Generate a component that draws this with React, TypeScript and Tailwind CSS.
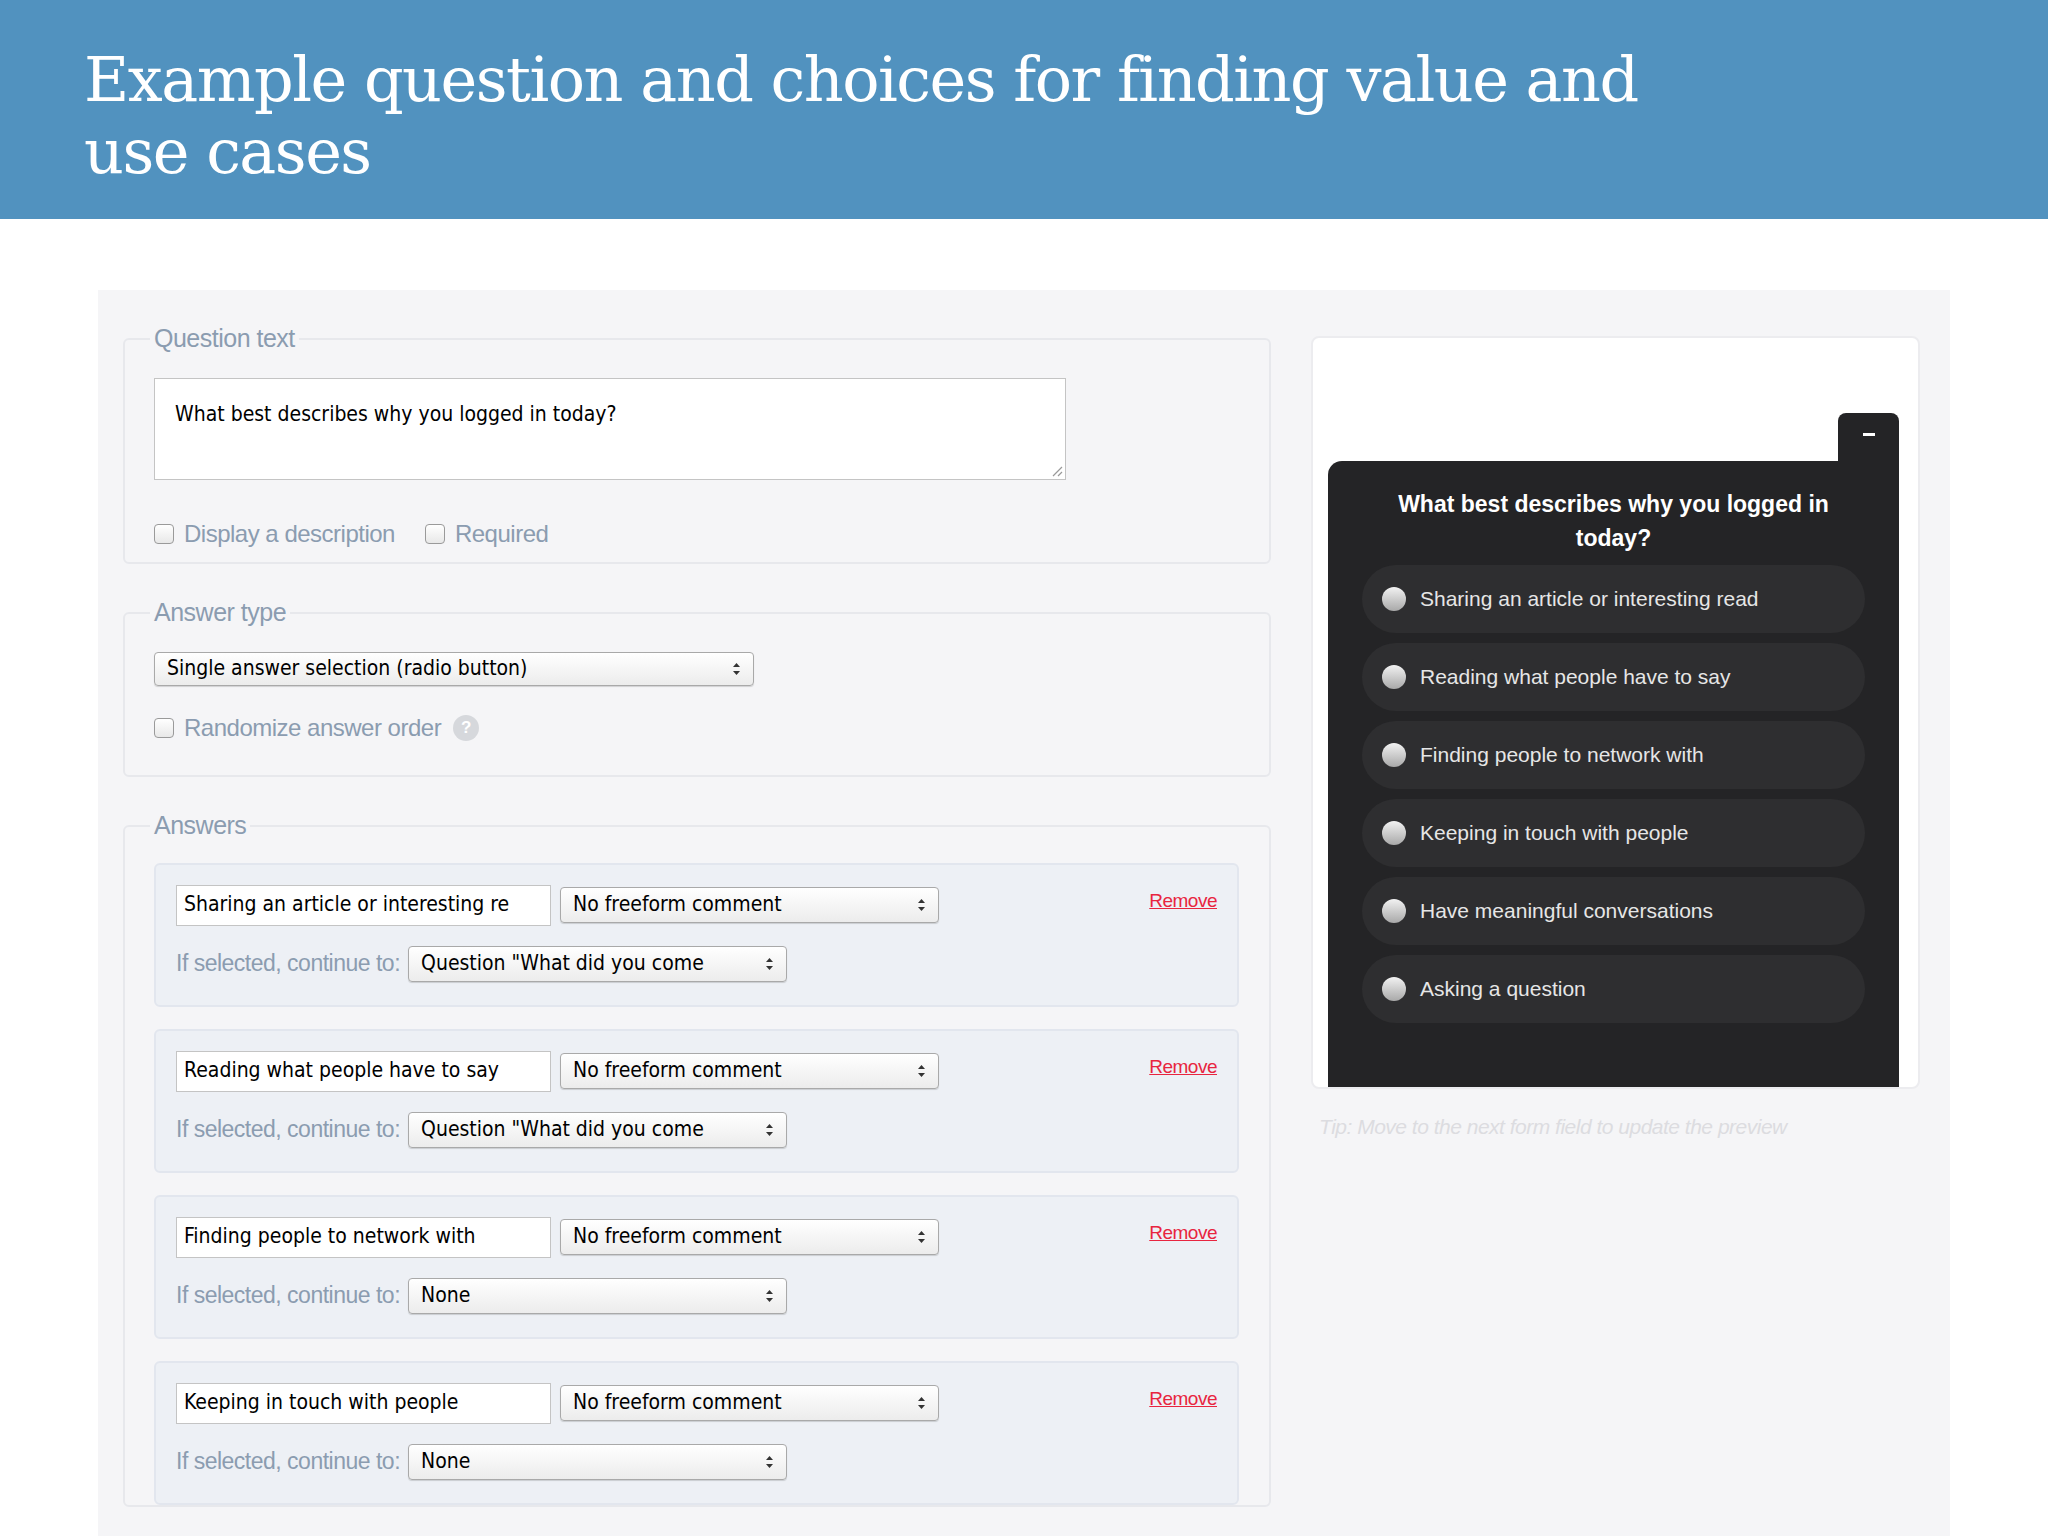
const answers = [
  { text: "Sharing an article or interesting re", next: 'Question "What did you come' },
  { text: "Reading what people have to say", next: 'Question "What did you come' },
  { text: "Finding people to network with", next: "None" },
  { text: "Keeping in touch with people", next: "None" },
];

const preview = [
  "Sharing an article or interesting read",
  "Reading what people have to say",
  "Finding people to network with",
  "Keeping in touch with people",
  "Have meaningful conversations",
  "Asking a question",
];

const uiFont = { fontFamily: '"Liberation Sans", Arial, sans-serif' };
const inputFont = { fontFamily: '"DejaVu Sans Condensed", "DejaVu Sans", sans-serif' };

function Arrows() {
  return (
    <svg width="9" height="14" viewBox="0 0 9 14" className="shrink-0">
      <path d="M4.5 1 L8 5 H1 Z" fill="#333" />
      <path d="M4.5 13 L8 9 H1 Z" fill="#333" />
    </svg>
  );
}

function Select({ label, className }: { label: string; className: string }) {
  return (
    <div
      className={`flex items-center justify-between rounded-[4px] border border-[#a9a9a9] bg-gradient-to-b from-white to-[#ececec] pl-3 pr-3 text-[21px] text-black shadow-[0_1px_1px_rgba(0,0,0,0.15)] ${className}`}
      style={inputFont}
    >
      <span className="truncate whitespace-nowrap">{label}</span>
      <Arrows />
    </div>
  );
}

function Checkbox({ label }: { label: string }) {
  return (
    <label className="flex items-center gap-[10px]">
      <span className="h-[20px] w-[20px] rounded-[4px] border border-[#9a9a9a] bg-gradient-to-b from-white to-[#e8e8e8]" />
      <span className="text-[24px] tracking-[-0.5px] text-[#8b9cb0]">{label}</span>
    </label>
  );
}

function Fieldset({ legend, children, className }: { legend: string; children: React.ReactNode; className: string }) {
  return (
    <fieldset className={`rounded-[6px] border-2 border-[#e7e8ec] px-[29px] ${className}`}>
      <legend className="px-[4px] -ml-[4px] text-[25px] tracking-[-0.5px] text-[#8b9cb0]">{legend}</legend>
      {children}
    </fieldset>
  );
}

export default function App() {
  return (
    <div className="min-h-[1536px] w-[2048px] overflow-hidden bg-white" style={uiFont}>
      <header className="h-[219px] bg-[#5192bf] pl-[84px] pt-[44px]">
        <h1
          className="w-[1600px] text-[62px] leading-[72px] text-white"
          style={{ fontFamily: '"DejaVu Serif", "Liberation Serif", serif', letterSpacing: "-1.5px" }}
        >
          Example question and choices for finding value and use cases
        </h1>
      </header>

      <div className="ml-[98px] mt-[71px] flex h-[1300px] w-[1852px] gap-[40px] bg-[#f5f5f7] pl-[25px] pt-[30px]">
        <div className="flex w-[1148px] flex-col gap-[30px]">
          <Fieldset legend="Question text" className="h-[244px]">
            <div
              className="relative mt-[20px] h-[102px] w-[912px] border border-[#c4c4c4] bg-white px-[20px] pt-[20px] text-[21px] text-black"
              style={inputFont}
            >
              What best describes why you logged in today?
              <svg className="absolute bottom-[2px] right-[2px]" width="14" height="14" viewBox="0 0 14 14">
                <path d="M13 4 L4 13 M13 9 L9 13" stroke="#999" strokeWidth="1.2" />
              </svg>
            </div>
            <div className="mt-[36px] flex gap-[30px]">
              <Checkbox label="Display a description" />
              <Checkbox label="Required" />
            </div>
          </Fieldset>

          <Fieldset legend="Answer type" className="h-[183px]">
            <Select label="Single answer selection (radio button)" className="mt-[20px] h-[34px] w-[600px]" />
            <div className="mt-[24px] flex items-center gap-[12px]">
              <Checkbox label="Randomize answer order" />
              <span className="flex h-[26px] w-[26px] items-center justify-center rounded-full bg-[#d6d8dc] text-[17px] font-bold text-white">
                ?
              </span>
            </div>
          </Fieldset>

          <Fieldset legend="Answers" className="h-[700px] pr-[30px]">
            <div className="mt-[18px] flex flex-col gap-[22px]">
              {answers.map((a) => (
                <div
                  key={a.text}
                  className="relative h-[144px] rounded-[6px] border-2 border-[#e2e6ee] bg-[#edf0f5] pl-[20px] pt-[20px]"
                >
                  <div className="flex items-center gap-[9px]">
                    <div
                      className="flex h-[41px] w-[375px] items-center overflow-hidden whitespace-nowrap border border-[#c4c4c4] bg-white px-[7px] text-[21px] text-black"
                      style={inputFont}
                    >
                      {a.text}
                    </div>
                    <Select label="No freeform comment" className="h-[36px] w-[379px]" />
                  </div>
                  <div className="mt-[20px] flex items-center gap-[8px]">
                    <span className="text-[23px] tracking-[-0.5px] text-[#8b9cb0]">If selected, continue to:</span>
                    <Select label={a.next} className="h-[36px] w-[379px]" />
                  </div>
                  <a className="absolute right-[20px] top-[22px] text-[19px] tracking-[-0.5px] text-[#e8253f] underline">
                    Remove
                  </a>
                </div>
              ))}
            </div>
          </Fieldset>
        </div>

        <div className="w-[609px] pt-[16px]">
          <div className="flex h-[753px] flex-col justify-end rounded-[8px] border-2 border-[#ececef] bg-white px-[15px]">
            <div className="flex flex-col">
              <div className="flex justify-end pr-[4px]">
                <div className="flex h-[48px] w-[61px] justify-center rounded-t-[8px] bg-[#242426] pt-[20px]">
                  <span className="h-[3px] w-[12px] bg-white" />
                </div>
              </div>
              <div className="mr-[4px] h-[626px] rounded-tl-[14px] bg-[#242426] px-[34px] pt-[26px]">
                <p className="px-[20px] text-center text-[23px] font-bold leading-[34px] text-white">
                  What best describes why you logged in today?
                </p>
                <div className="mt-[10px] flex flex-col gap-[10px]">
                  {preview.map((p) => (
                    <div key={p} className="flex h-[68px] items-center gap-[14px] rounded-full bg-[#2e2e30] pl-[20px]">
                      <span className="h-[24px] w-[24px] rounded-full bg-gradient-to-b from-[#f2f2f2] to-[#a9a9a9]" />
                      <span className="text-[21px] text-[#e6e6e6]">{p}</span>
                    </div>
                  ))}
                </div>
              </div>
            </div>
          </div>
          <p className="mt-[22px] pl-[8px] text-[21px] italic tracking-[-0.5px] text-[#dcdce0]">
            Tip: Move to the next form field to update the preview
          </p>
        </div>
      </div>
    </div>
  );
}
